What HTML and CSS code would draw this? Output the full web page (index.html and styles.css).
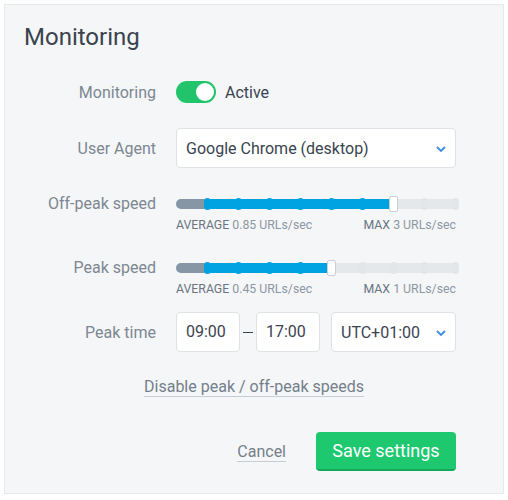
FILE: index.html
```html
<!DOCTYPE html>
<html lang="en">
<head>
  <meta charset="UTF-8" />
  <meta name="viewport" content="width=device-width, initial-scale=1.0"/>
  <title>Monitoring</title>

  <link rel="stylesheet" href="styles.css">
</head>
<body>

  <div class="panel">
    <h2 class="panel-title">Monitoring</h2>

    <!-- Monitoring toggle -->
    <div class="row row-toggle">
      <div class="row-label">Monitoring</div>
      <div class="toggle-wrap">
        <span class="toggle"><span class="toggle-knob"></span></span>
        <span class="toggle-text">Active</span>
      </div>
    </div>

    <!-- User agent -->
    <div class="row">
      <div class="row-label">User Agent</div>
      <div class="select select-wide">
        <span>Google Chrome (desktop)</span>
        <svg class="chevron" width="10" height="6" viewBox="0 0 10 6"><path d="M1 1l4 4 4-4" fill="none" stroke="#3d8fde" stroke-width="1.8"/></svg>
      </div>
    </div>

    <!-- Off-peak speed -->
    <div class="row row-slider">
      <div class="row-label">Off-peak speed</div>
      <div class="slider-box">
        <div class="slider">
          <div class="track">
            <span class="track-avg"></span>
            <span class="track-fill" style="width: 186px"></span>
          </div>
          <span class="dot on" style="left: 28px"></span>
          <span class="dot on" style="left: 59px"></span>
          <span class="dot on" style="left: 90px"></span>
          <span class="dot on" style="left: 121px"></span>
          <span class="dot on" style="left: 152px"></span>
          <span class="dot on" style="left: 183px"></span>
          <span class="dot" style="left: 245px"></span>
          <span class="dot" style="left: 276px"></span>
          <span class="handle" style="left: 213px"></span>
        </div>
        <div class="caption">
          <span><b>AVERAGE</b> 0.85 URLs/sec</span>
          <span><b>MAX</b> 3 URLs/sec</span>
        </div>
      </div>
    </div>

    <!-- Peak speed -->
    <div class="row row-slider">
      <div class="row-label">Peak speed</div>
      <div class="slider-box">
        <div class="slider">
          <div class="track">
            <span class="track-avg"></span>
            <span class="track-fill" style="width: 124px"></span>
          </div>
          <span class="dot on" style="left: 28px"></span>
          <span class="dot on" style="left: 59px"></span>
          <span class="dot on" style="left: 90px"></span>
          <span class="dot on" style="left: 121px"></span>
          <span class="dot" style="left: 183px"></span>
          <span class="dot" style="left: 214px"></span>
          <span class="dot" style="left: 245px"></span>
          <span class="dot" style="left: 276px"></span>
          <span class="handle" style="left: 151px"></span>
        </div>
        <div class="caption">
          <span><b>AVERAGE</b> 0.45 URLs/sec</span>
          <span><b>MAX</b> 1 URLs/sec</span>
        </div>
      </div>
    </div>

    <!-- Peak time -->
    <div class="row row-time">
      <div class="row-label">Peak time</div>
      <div class="time-group">
        <div class="time-box">09:00</div>
        <span class="time-dash"></span>
        <div class="time-box">17:00</div>
        <div class="select select-tz">
          <span>UTC+01:00</span>
          <svg class="chevron" width="10" height="6" viewBox="0 0 10 6"><path d="M1 1l4 4 4-4" fill="none" stroke="#3d8fde" stroke-width="1.8"/></svg>
        </div>
      </div>
    </div>

    <div class="disable-row">
      <a href="#" class="link">Disable peak / off-peak speeds</a>
    </div>

    <div class="actions">
      <a href="#" class="link cancel-link">Cancel</a>
      <button class="save-button">Save settings</button>
    </div>
  </div>

</body>
</html>
```

FILE: styles.css
```css
body {
  font-family: Roboto, "Noto Sans", sans-serif;
  margin: 0;
  padding: 4px;
  background: #ffffff;
  color: #3a444f;
}
.panel {
  width: 498px;
  height: 488px;
  box-sizing: content-box;
  background: #f5f6f8;
  border: 1px solid #e7e9ec;
  padding: 0;
}
.panel-title {
  font-size: 24px;
  font-weight: 400;
  line-height: 28px;
  margin: 18px 0 0 19px;
  color: #3a434e;
}
.row {
  display: flex;
  align-items: center;
  gap: 20px;
  margin-left: 19px;
  margin-top: 16px;
}
.row-toggle {
  height: 40px;
  margin-top: 21px;
}
.row-label {
  width: 132px;
  text-align: right;
  font-size: 16px;
  color: #7c8792;
}
.toggle-wrap {
  display: flex;
  align-items: center;
  gap: 9px;
}
.toggle {
  width: 40px;
  height: 22px;
  border-radius: 11px;
  background: #21c46b;
  display: flex;
  align-items: center;
  justify-content: flex-end;
  padding: 0 2px;
  box-sizing: border-box;
}
.toggle-knob {
  width: 18px;
  height: 18px;
  border-radius: 50%;
  background: #ffffff;
}
.toggle-text {
  font-size: 16px;
  color: #3a444f;
}
.select {
  height: 40px;
  box-sizing: border-box;
  background: #ffffff;
  border: 1px solid #dfe2e6;
  border-radius: 4px;
  display: flex;
  align-items: center;
  justify-content: space-between;
  padding: 0 9px 0 9px;
  font-size: 16px;
  color: #3a444f;
}
.select-wide {
  width: 280px;
}
.chevron {
  margin-top: 1px;
}
.row-slider {
  align-items: flex-start;
  margin-top: 26px;
}
.row-slider .row-label {
  line-height: 20px;
}
.slider-box {
  width: 283px;
}
.slider {
  position: relative;
  height: 20px;
  display: flex;
  align-items: center;
}
.track {
  width: 283px;
  height: 10px;
  border-radius: 5px;
  background: #e5e8eb;
  display: flex;
  overflow: hidden;
}
.track-avg {
  width: 31px;
  background: #8796a4;
}
.track-fill {
  background: #00a3e2;
}
.dot {
  position: absolute;
  top: 4px;
  width: 7px;
  height: 12px;
  border-radius: 4px;
  background: #e3e6e9;
}
.dot.on {
  background: #00a3e2;
}
.handle {
  position: absolute;
  top: 2px;
  width: 9px;
  height: 16px;
  box-sizing: border-box;
  background: #ffffff;
  border: 1px solid #c9ced4;
  border-radius: 2px;
}
.caption {
  display: flex;
  justify-content: space-between;
  width: 280px;
  margin-top: 4px;
  font-size: 12.3px;
  line-height: 14px;
  color: #8d97a2;
}
.caption b {
  font-weight: 400;
  color: #6a7581;
}
.row-time {
  margin-top: 16px;
}
.time-group {
  display: flex;
  align-items: center;
}
.time-box {
  width: 64px;
  height: 40px;
  box-sizing: border-box;
  background: #ffffff;
  border: 1px solid #dfe2e6;
  border-radius: 4px;
  font-size: 16px;
  line-height: 38px;
  padding-left: 9px;
  color: #3a444f;
}
.time-dash {
  width: 10px;
  height: 1px;
  background: #3a444f;
  margin: 0 3px;
}
.select-tz {
  width: 125px;
  margin-left: 11px;
}
.disable-row {
  text-align: center;
  margin-top: 25px;
}
.link {
  display: inline-block;
  font-size: 16px;
  line-height: 19px;
  color: #747f8b;
  text-decoration: none;
  border-bottom: 1px solid #c7ccd2;
}
.actions {
  display: flex;
  justify-content: flex-end;
  align-items: center;
  gap: 30px;
  margin-top: 35px;
  margin-right: 47px;
}
.save-button {
  font-family: Roboto, "Noto Sans", sans-serif;
  font-size: 18px;
  height: 39px;
  width: 140px;
  padding: 0;
  background-color: #1dc86f;
  color: #ffffff;
  border: none;
  border-bottom: 2px solid #16a85a;
  border-radius: 4px;
  cursor: pointer;
}
```
